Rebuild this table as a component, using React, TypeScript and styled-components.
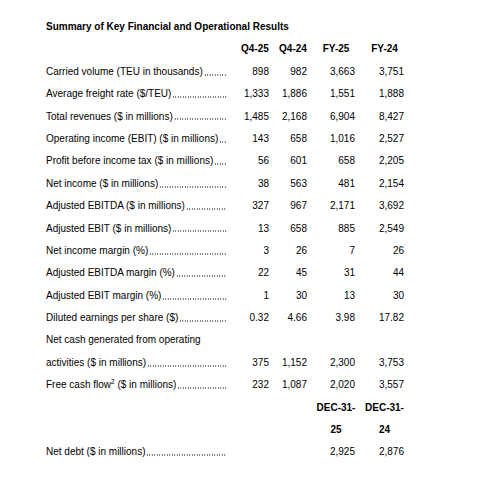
import React from "react";
import styled, { createGlobalStyle } from "styled-components";

const Global = createGlobalStyle`
  html, body { margin: 0; padding: 0; background: #ffffff; }
  body { font-family: "Liberation Sans", Arial, sans-serif; color: #000; }
`;

const Page = styled.div`
  width: 500px;
  height: 477px;
  box-sizing: border-box;
  padding: 16px 0 0 46px;
  font-size: 10px;
  line-height: 22.4px;
  font-family: "Liberation Sans", Arial, sans-serif;
  color: #000;
`;

const Title = styled.div`
  font-weight: bold;
  white-space: nowrap;
`;

const Row = styled.div`
  display: grid;
  grid-template-columns: 185px 28px 28px 38px 39px;
  column-gap: 10px;
  height: 22.4px;
`;

const Label = styled.div`
  display: flex;
  min-width: 0;
  padding-right: 4px;
  white-space: nowrap;
`;

const LabelText = styled.span`
  flex: none;
  sup { font-size: 6.5px; line-height: 0; vertical-align: 4px; }
`;

const Leader = styled.span`
  flex: 1;
  min-width: 0;
  margin-left: 1px;
  background-image: radial-gradient(circle at center, #555 0.5px, rgba(0,0,0,0) 0.9px);
  background-size: 2.5px 2px;
  background-repeat: repeat-x;
  background-position: 0 12.8px;
`;

const Num = styled.div`
  text-align: right;
  white-space: nowrap;
`;

const Head = styled.div`
  font-weight: bold;
  white-space: nowrap;
  display: flex;
  justify-content: center;
`;

const Blank = styled.div``;

type R = { label: React.ReactNode; vals: string[]; dots?: boolean };

const rows1: R[] = [
  { label: "Carried volume (TEU in thousands)", vals: ["898", "982", "3,663", "3,751"] },
  { label: "Average freight rate ($/TEU)", vals: ["1,333", "1,886", "1,551", "1,888"] },
  { label: "Total revenues ($ in millions)", vals: ["1,485", "2,168", "6,904", "8,427"] },
  { label: "Operating income (EBIT) ($ in millions)", vals: ["143", "658", "1,016", "2,527"] },
  { label: "Profit before income tax ($ in millions)", vals: ["56", "601", "658", "2,205"] },
  { label: "Net income ($ in millions)", vals: ["38", "563", "481", "2,154"] },
  { label: "Adjusted EBITDA ($ in millions)", vals: ["327", "967", "2,171", "3,692"] },
  { label: "Adjusted EBIT ($ in millions)", vals: ["13", "658", "885", "2,549"] },
  { label: "Net income margin (%)", vals: ["3", "26", "7", "26"] },
  { label: "Adjusted EBITDA margin (%)", vals: ["22", "45", "31", "44"] },
  { label: "Adjusted EBIT margin (%)", vals: ["1", "30", "13", "30"] },
  { label: "Diluted earnings per share ($)", vals: ["0.32", "4.66", "3.98", "17.82"] },
  { label: "Net cash generated from operating", vals: ["", "", "", ""], dots: false },
  { label: "activities ($ in millions)", vals: ["375", "1,152", "2,300", "3,753"] },
  {
    label: (
      <>
        Free cash flow<sup>2</sup> ($ in millions)
      </>
    ),
    vals: ["232", "1,087", "2,020", "3,557"],
  },
];

const DataRow: React.FC<R> = ({ label, vals, dots = true }) => (
  <Row>
    <Label>
      <LabelText>{label}</LabelText>
      {dots && <Leader />}
    </Label>
    {vals.map((v, i) => (
      <Num key={i}>{v}</Num>
    ))}
  </Row>
);

export default function App() {
  return (
    <>
      <Global />
      <Page>
        <Title>Summary of Key Financial and Operational Results</Title>
        <Row>
          <Blank />
          <Head>Q4-25</Head>
          <Head>Q4-24</Head>
          <Head>FY-25</Head>
          <Head>FY-24</Head>
        </Row>
        {rows1.map((r, i) => (
          <DataRow key={i} {...r} />
        ))}
        <Row>
          <Blank />
          <Blank />
          <Blank />
          <Head>DEC-31-</Head>
          <Head>DEC-31-</Head>
        </Row>
        <Row>
          <Blank />
          <Blank />
          <Blank />
          <Head>25</Head>
          <Head>24</Head>
        </Row>
        <DataRow label="Net debt ($ in millions)" vals={["", "", "2,925", "2,876"]} />
      </Page>
    </>
  );
}
